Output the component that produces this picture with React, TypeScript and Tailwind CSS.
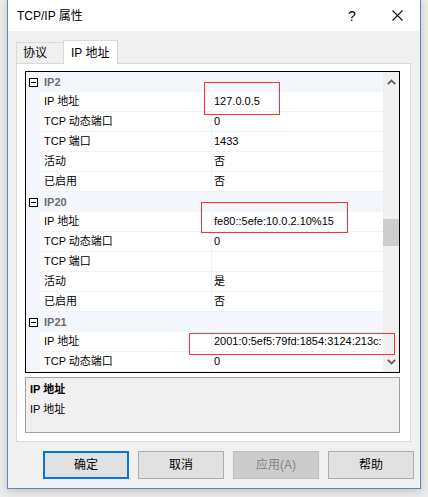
import React from "react";

type Row = { label: string; value: string };
type Group = { name: string; rows: Row[] };

const groups: Group[] = [
  {
    name: "IP2",
    rows: [
      { label: "IP 地址", value: "127.0.0.5" },
      { label: "TCP 动态端口", value: "0" },
      { label: "TCP 端口", value: "1433" },
      { label: "活动", value: "否" },
      { label: "已启用", value: "否" },
    ],
  },
  {
    name: "IP20",
    rows: [
      { label: "IP 地址", value: "fe80::5efe:10.0.2.10%15" },
      { label: "TCP 动态端口", value: "0" },
      { label: "TCP 端口", value: "" },
      { label: "活动", value: "是" },
      { label: "已启用", value: "否" },
    ],
  },
  {
    name: "IP21",
    rows: [
      { label: "IP 地址", value: "2001:0:5ef5:79fd:1854:3124:213c:" },
      { label: "TCP 动态端口", value: "0" },
    ],
  },
];

function MinusBox() {
  return (
    <div className="w-[9px] h-[9px] border border-black bg-white flex items-center justify-center">
      <div className="w-[5px] h-px bg-black" />
    </div>
  );
}

function Chevron({ down }: { down?: boolean }) {
  return (
    <svg width="9" height="6" viewBox="0 0 9 6" className={down ? "rotate-180" : ""}>
      <path d="M0.8 5.2 L4.5 1.5 L8.2 5.2" fill="none" stroke="#606060" strokeWidth="1.8" />
    </svg>
  );
}

function Button({ label, primary, disabled }: { label: string; primary?: boolean; disabled?: boolean }) {
  const cls = primary
    ? "border-2 border-[#0078d7] bg-[#e1e1e1] text-black"
    : disabled
    ? "border border-[#bfbfbf] bg-[#cccccc] text-[#838383]"
    : "border border-[#adadad] bg-[#e1e1e1] text-black";
  return (
    <div className={`w-[86px] h-[28px] flex items-center justify-center text-[12px] ${cls}`}>{label}</div>
  );
}

export default function App() {
  return (
    <div
      className="w-[428px] h-[497px] bg-[#ebebeb] px-[7px] pb-[8px] text-[12px] text-black"
      style={{ fontFamily: '"Liberation Sans", "Noto Sans CJK SC", sans-serif' }}
    >
      <div className="h-[489px] border-x border-b border-[#5b84c4] bg-[#f0f0f0] flex flex-col shadow-[0_2px_8px_rgba(0,0,0,0.18)]">
        {/* Title bar */}
        <div className="h-[31px] bg-white flex items-center pl-[9px] shrink-0">
          <span className="flex-1 leading-none">TCP/IP 属性</span>
          <span className="w-[10px] text-[14px] leading-none mr-[34px]">?</span>
          <svg width="11" height="11" viewBox="0 0 11 11" className="mr-[17px]">
            <path d="M0.5 0.5 L10.5 10.5 M10.5 0.5 L0.5 10.5" stroke="#111" strokeWidth="1.1" />
          </svg>
        </div>

        {/* Tabs */}
        <div className="pt-[9px] pl-[8px] flex items-end h-[32px] shrink-0">
          <div className="w-[47px] h-[21px] border-l border-t border-[#d9d9d9] bg-[#f0f0f0] flex items-center pl-[6px] leading-none">
            协议
          </div>
          <div className="relative z-10 w-[55px] h-[24px] -mb-px border-x border-t border-[#d9d9d9] bg-white flex items-center pl-[7px] leading-none">
            IP 地址
          </div>
        </div>

        {/* Tab panel */}
        <div className="ml-[8px] w-[395px] h-[379px] border border-[#d9d9d9] bg-white pt-[7px] pl-[8px] flex flex-col shrink-0 text-[11px]">
          <div className="relative w-[375px] h-[302px] border border-black flex">
            <div className="flex-1 flex flex-col overflow-hidden">
              {groups.map((g) => (
                <React.Fragment key={g.name}>
                  <div className="h-[20px] bg-[#f3f6fa] flex items-center shrink-0">
                    <div className="w-[14px] flex justify-center pl-[1px]">
                      <MinusBox />
                    </div>
                    <span className="pl-[4px] font-bold text-[#6d6d6d] leading-none">{g.name}</span>
                  </div>
                  {g.rows.map((r, i) => (
                    <div key={i} className="h-[20px] flex shrink-0">
                      <div className="w-[14px] bg-[#f3f6fa]" />
                      <div className="w-[172px] border-r border-b border-[#eef1f5] flex items-center pl-[4px] leading-none whitespace-nowrap">
                        {r.label}
                      </div>
                      <div className="flex-1 min-w-0 border-b border-[#eef1f5] flex items-center pl-[2px] leading-none whitespace-nowrap overflow-hidden">
                        {r.value}
                      </div>
                    </div>
                  ))}
                </React.Fragment>
              ))}
            </div>
            {/* Scrollbar */}
            <div className="w-[16px] bg-[#f0f0f0] flex flex-col items-center">
              <div className="h-[18px] flex items-center justify-center pt-[2px]">
                <Chevron />
              </div>
              <div className="h-[129px]" />
              <div className="w-full h-[27px] bg-[#cdcdcd]" />
              <div className="flex-1" />
              <div className="h-[18px] flex items-center justify-center pb-[2px]">
                <Chevron down />
              </div>
            </div>

            {/* Annotation boxes */}
            <div className="absolute left-[178px] top-[10px] w-[76px] h-[33px] border border-[#ff3030]" />
            <div className="absolute left-[175px] top-[130px] w-[147px] h-[31px] border border-[#ff3030]" />
            <div className="absolute left-[163px] top-[261px] w-[206px] h-[22px] border border-[#ff3030]" />
          </div>

          {/* Description */}
          <div className="mt-[4px] w-[375px] h-[56px] border border-[#a0a0a0] bg-[#f0f0f0] pl-[4px] pt-[1px] flex flex-col">
            <div className="h-[20px] flex items-center font-bold leading-none">IP 地址</div>
            <div className="h-[20px] flex items-center leading-none">IP 地址</div>
          </div>
        </div>

        {/* Buttons */}
        <div className="mt-[9px] pl-[35px] flex gap-[9px]">
          <Button label="确定" primary />
          <Button label="取消" />
          <Button label="应用(A)" disabled />
          <Button label="帮助" />
        </div>
      </div>
    </div>
  );
}
